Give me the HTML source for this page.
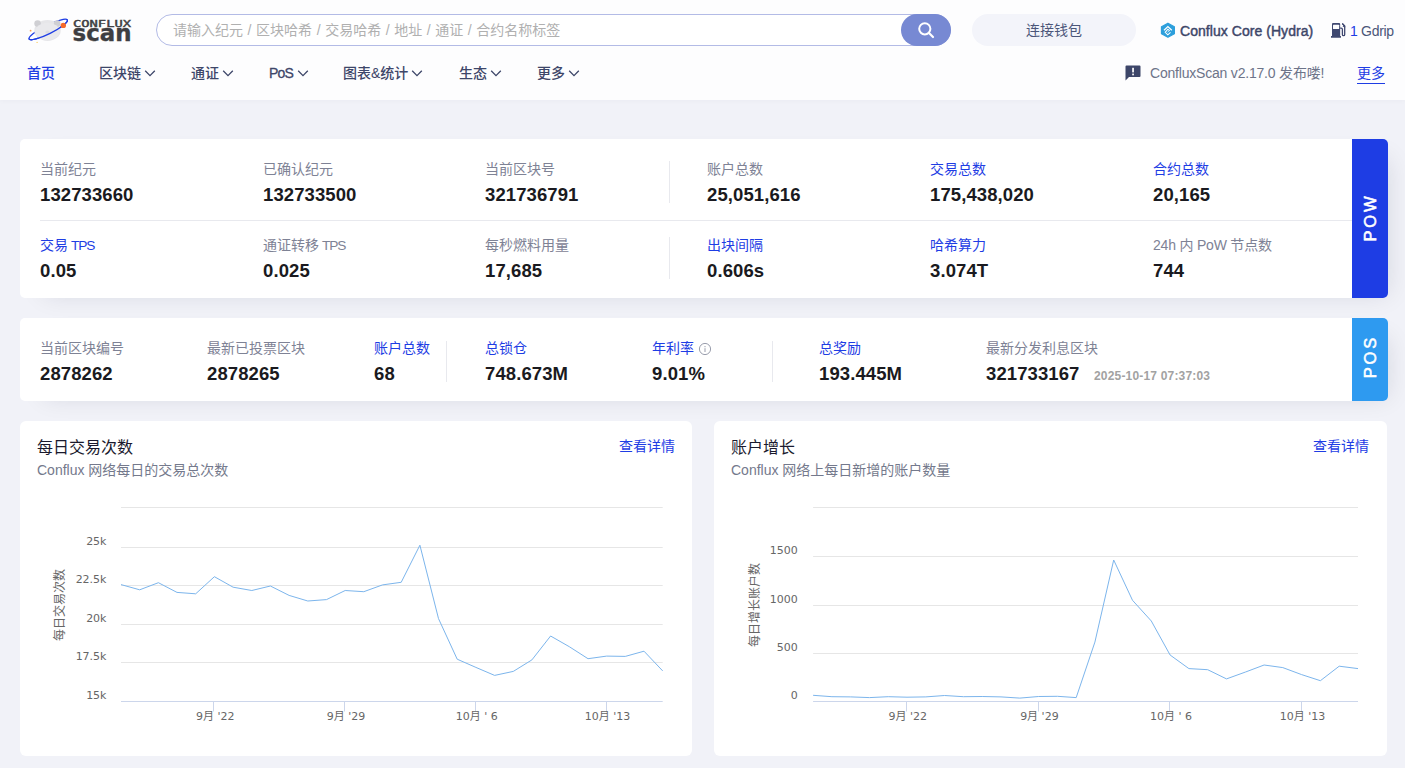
<!DOCTYPE html>
<html lang="zh-CN">
<head>
<meta charset="utf-8">
<title>ConfluxScan</title>
<style>
*{box-sizing:border-box;margin:0;padding:0}
html,body{width:1405px;height:768px;overflow:hidden}
body{background:#f1f2f8;font-family:"Liberation Sans","Noto Sans CJK SC",sans-serif;color:#1a1a2e;position:relative;font-size:14px}
.abs{position:absolute}
#header{position:absolute;left:0;top:0;width:1405px;height:100px;background:#fdfdfe;box-shadow:0 1px 5px rgba(20,27,50,0.03)}
#search{position:absolute;left:156px;top:14px;width:795px;height:32px;border:1px solid #b3bbe6;border-radius:16px;background:#fff}
#search .ph{position:absolute;left:16px;top:0;line-height:30px;font-size:14px;color:#b0b0b0;white-space:nowrap;word-spacing:0.7px}
#sbtn{position:absolute;left:901px;top:14px;width:50px;height:32px;border-radius:16px;background:#7789d3}
#wallet{position:absolute;left:972px;top:14px;width:164px;height:32px;border-radius:16px;background:#f3f4fa;color:#4b5679;font-size:14px;line-height:32px;text-align:center}
.nav{position:absolute;top:62px;height:22px;line-height:22px;font-size:14px;font-weight:500;color:#3d4669;white-space:nowrap}
.nav svg{display:inline-block;vertical-align:middle;margin-left:3px;margin-top:-2px}
.card{position:absolute;background:#fff;box-shadow:12px 8px 24px -12px rgba(20,27,50,0.12)}
.lab{position:absolute;font-size:14px;line-height:20px;color:#7e8295;white-space:nowrap}
.lab.b{color:#1e3de4}
.val{position:absolute;font-size:18.5px;letter-spacing:0.1px;margin-top:1px;line-height:24px;font-weight:bold;color:#1a1a20;white-space:nowrap}
.vd{position:absolute;width:1px;background:#e8e9ee}
.tab{position:absolute;color:#fff;font-weight:normal;-webkit-text-stroke:0.55px #fff;font-size:16.5px;letter-spacing:2.9px;border-radius:0 5px 5px 0}
.tab span{position:absolute;left:50%;top:50%;transform:translate(-50%,-50%) rotate(-90deg);white-space:nowrap;display:block;padding-left:2.9px}
.ct{position:absolute;font-size:16px;line-height:22px;color:#1a1a2e;white-space:nowrap}
.cs{position:absolute;font-size:14px;line-height:20px;color:#74798c;white-space:nowrap}
.cl{position:absolute;font-size:14px;line-height:20px;color:#1e3de4;white-space:nowrap}
svg text{font-family:"Liberation Sans","Noto Sans CJK SC",sans-serif}
svg text.hc{font-family:"DejaVu Sans","Noto Sans CJK SC",sans-serif}
</style>
</head>
<body>
<div id="header">
  <!-- logo -->
  <svg class="abs" style="left:26px;top:14px" width="110" height="32" viewBox="0 0 110 32">
    <g transform="translate(22.2 15.5) rotate(-26.4)"><ellipse cx="0" cy="0" rx="21.4" ry="4.3" fill="none" stroke="#1e3de4" stroke-width="1.3"/></g>
    <ellipse cx="21.5" cy="16.4" rx="13.2" ry="10.5" fill="#e6e6e9"/>
    <circle cx="11.6" cy="9.6" r="3.3" fill="#cfcfd3"/>
    <circle cx="31.2" cy="9.6" r="3.3" fill="#cfcfd3"/>
    <ellipse cx="21.5" cy="17.4" rx="12" ry="8.6" fill="#e9e9ec"/>
    <ellipse cx="21.5" cy="18" rx="2.2" ry="1.6" fill="#dcdce0"/>
    <g transform="translate(22.2 15.5) rotate(-26.4)"><path d="M-21.4 0 A21.4 4.3 0 0 0 21.4 0" fill="none" stroke="#1e3de4" stroke-width="1.3" stroke-linecap="round"/></g>
    <circle cx="37.3" cy="11.4" r="2.7" fill="#f56a2c"/>
    <circle cx="4.6" cy="16.7" r="0.9" fill="#f9a45a"/>
    <circle cx="11.1" cy="28.4" r="0.7" fill="#fbd36a"/>
    <text x="47" y="12.5" font-size="8" fill="#3e3e42" stroke="#3e3e42" stroke-width="0.35" textLength="58" lengthAdjust="spacingAndGlyphs" style="font-family:'DejaVu Sans Mono','Liberation Mono',monospace">CONFLUX</text>
    <text x="46.5" y="27.3" font-size="22.6" font-weight="bold" fill="#3e3e42" stroke="#3e3e42" stroke-width="0.35" textLength="59" lengthAdjust="spacingAndGlyphs" style="font-family:'DejaVu Sans','Liberation Sans',sans-serif">scan</text>
  </svg>
  <div id="search"><span class="ph">请输入纪元 / 区块哈希 / 交易哈希 / 地址 / 通证 / 合约名称标签</span></div>
  <div id="sbtn">
    <svg class="abs" style="left:16px;top:7px" width="18" height="18" viewBox="0 0 18 18"><circle cx="7.8" cy="7.8" r="5.6" fill="none" stroke="#fff" stroke-width="2"/><path d="M12 12 L16 16" stroke="#fff" stroke-width="2.2" stroke-linecap="round"/></svg>
  </div>
  <div id="wallet">连接钱包</div>
  <!-- network -->
  <svg class="abs" style="left:1159px;top:22px" width="18" height="17" viewBox="0 0 18 17">
    <path d="M8.92 1.25 L15.35 4.7 V11.7 L8.92 15.2 L2.5 11.7 V4.7 Z" fill="#2d9fdc" stroke="#2d9fdc" stroke-width="1.3" stroke-linejoin="round"/>
    <path d="M5 8.2 L8.88 4.6 L12.8 8.25" fill="none" stroke="#fff" stroke-width="1.25"/>
    <path d="M10.7 8.9 L8.88 7.2 L6.2 10.3 L8.8 12.8 L11.5 10.3" fill="none" stroke="#fff" stroke-width="1.05"/>
    <path d="M9.7 9.2 L8.5 10.4" fill="none" stroke="#fff" stroke-width="0.9"/>
  </svg>
  <div class="abs" style="left:1180px;top:20px;line-height:22px;font-size:14px;font-weight:normal;-webkit-text-stroke:0.45px #3d4669;color:#3d4669;white-space:nowrap;letter-spacing:0.05px" id="net">Conflux Core (Hydra)</div>
  <svg class="abs" style="left:1330px;top:22px" width="17" height="17" viewBox="0 0 17 17">
    <path d="M2 2.1 Q2 1.05 3.05 1.05 H9.1 Q10.15 1.05 10.15 2.1 V14.1 H10.95 V15.7 H1 V14.1 H2 Z" fill="#3f4870"/>
    <rect x="3" y="2.7" width="6.15" height="4.35" rx="0.6" fill="#fdfdfe"/>
    <path d="M10.1 6.2 H11.2 Q12.4 6.2 12.4 7.4 V12.5 Q12.4 13.7 13.55 13.7 Q14.7 13.7 14.7 12.5 V4.2 L12.4 1.5" fill="none" stroke="#3f4870" stroke-width="1.3"/>
    <path d="M12.1 1.1 L15.2 3.6 V5.4 L12.6 4.4 L13.5 3.2 L12.1 2.4 Z" fill="#3f4870"/>
  </svg>
  <div class="abs" style="left:1350px;top:20px;line-height:22px;font-size:14px;color:#4b5679;white-space:nowrap;letter-spacing:-0.3px"><span style="color:#1e3de4">1</span> Gdrip</div>

  <!-- nav -->
  <div class="nav" style="left:27px;color:#1e3de4;font-weight:500">首页</div>
  <div class="nav" style="left:99px">区块链<svg width="12" height="7" viewBox="0 0 12 7"><path d="M1.2 0.8 L6 5.6 L10.8 0.8" fill="none" stroke="#3d4669" stroke-width="1.3"/></svg></div>
  <div class="nav" style="left:191px">通证<svg width="12" height="7" viewBox="0 0 12 7"><path d="M1.2 0.8 L6 5.6 L10.8 0.8" fill="none" stroke="#3d4669" stroke-width="1.3"/></svg></div>
  <div class="nav" style="left:269px"><span style="letter-spacing:-0.8px;margin-right:1.3px;-webkit-text-stroke:0.3px #3d4669">PoS</span><svg width="12" height="7" viewBox="0 0 12 7"><path d="M1.2 0.8 L6 5.6 L10.8 0.8" fill="none" stroke="#3d4669" stroke-width="1.3"/></svg></div>
  <div class="nav" style="left:343px">图表&amp;统计<svg width="12" height="7" viewBox="0 0 12 7"><path d="M1.2 0.8 L6 5.6 L10.8 0.8" fill="none" stroke="#3d4669" stroke-width="1.3"/></svg></div>
  <div class="nav" style="left:459px">生态<svg width="12" height="7" viewBox="0 0 12 7"><path d="M1.2 0.8 L6 5.6 L10.8 0.8" fill="none" stroke="#3d4669" stroke-width="1.3"/></svg></div>
  <div class="nav" style="left:537px">更多<svg width="12" height="7" viewBox="0 0 12 7"><path d="M1.2 0.8 L6 5.6 L10.8 0.8" fill="none" stroke="#3d4669" stroke-width="1.3"/></svg></div>

  <!-- notice -->
  <svg class="abs" style="left:1124px;top:64px" width="18" height="18" viewBox="0 0 18 18">
    <path d="M2.5 1.5 H15.5 Q16.5 1.5 16.5 2.5 V12 Q16.5 13 15.5 13 H5 L1.5 16.5 V2.5 Q1.5 1.5 2.5 1.5 Z" fill="#3d4669"/>
    <rect x="8.2" y="3.8" width="1.7" height="4.6" fill="#fff"/><rect x="8.2" y="9.6" width="1.7" height="1.7" fill="#fff"/>
  </svg>
  <div class="abs" style="left:1150px;top:62px;line-height:22px;font-size:14px;color:#6d7489;white-space:nowrap;letter-spacing:-0.2px">ConfluxScan v2.17.0 发布喽!</div>
  <div class="abs" style="left:1357px;top:62px;line-height:22px;font-size:14px;color:#1e3de4;white-space:nowrap;border-bottom:1px solid #1e3de4;height:22px">更多</div>
</div>

<!-- POW card -->
<div class="card" style="left:20px;top:139px;width:1368px;height:159px;border-radius:5px"></div>
<div class="tab" style="left:1352px;top:139px;width:36px;height:159px;background:#1e3de4"><span>POW</span></div>
<div class="abs" style="left:40px;top:220px;width:1312px;height:1px;background:#e8e9ee"></div>
<div class="vd" style="left:669px;top:161px;height:42px"></div>
<div class="vd" style="left:669px;top:237px;height:42px"></div>

<div class="lab" style="left:40px;top:159px">当前纪元</div><div class="val" style="left:40px;top:182px">132733660</div>
<div class="lab" style="left:263px;top:159px">已确认纪元</div><div class="val" style="left:263px;top:182px">132733500</div>
<div class="lab" style="left:485px;top:159px">当前区块号</div><div class="val" style="left:485px;top:182px">321736791</div>
<div class="lab" style="left:707px;top:159px">账户总数</div><div class="val" style="left:707px;top:182px">25,051,616</div>
<div class="lab b" style="left:930px;top:159px">交易总数</div><div class="val" style="left:930px;top:182px">175,438,020</div>
<div class="lab b" style="left:1153px;top:159px">合约总数</div><div class="val" style="left:1153px;top:182px">20,165</div>

<div class="lab b" style="left:40px;top:235px">交易<span style="font-size:13.7px;letter-spacing:-1.15px;margin-left:0.4px"> TPS</span></div><div class="val" style="left:40px;top:258px">0.05</div>
<div class="lab" style="left:263px;top:235px">通证转移<span style="font-size:13.7px;letter-spacing:-1.15px;margin-left:0.4px"> TPS</span></div><div class="val" style="left:263px;top:258px">0.025</div>
<div class="lab" style="left:485px;top:235px">每秒燃料用量</div><div class="val" style="left:485px;top:258px">17,685</div>
<div class="lab b" style="left:707px;top:235px">出块间隔</div><div class="val" style="left:707px;top:258px">0.606s</div>
<div class="lab b" style="left:930px;top:235px">哈希算力</div><div class="val" style="left:930px;top:258px">3.074T</div>
<div class="lab" style="left:1153px;top:235px;letter-spacing:-0.2px">24h 内 PoW 节点数</div><div class="val" style="left:1153px;top:258px">744</div>

<!-- POS card -->
<div class="card" style="left:20px;top:318px;width:1368px;height:83px;border-radius:5px"></div>
<div class="tab" style="left:1352px;top:318px;width:36px;height:83px;background:#2e9af0"><span style="margin-top:-1.5px">POS</span></div>
<div class="vd" style="left:446px;top:341px;height:41px"></div>
<div class="vd" style="left:772px;top:341px;height:41px"></div>
<div class="lab" style="left:40px;top:338px">当前区块编号</div><div class="val" style="left:40px;top:361px">2878262</div>
<div class="lab" style="left:207px;top:338px">最新已投票区块</div><div class="val" style="left:207px;top:361px">2878265</div>
<div class="lab b" style="left:374px;top:338px">账户总数</div><div class="val" style="left:374px;top:361px">68</div>
<div class="lab b" style="left:485px;top:338px">总锁仓</div><div class="val" style="left:485px;top:361px">748.673M</div>
<div class="lab b" style="left:652px;top:338px">年利率</div><div class="val" style="left:652px;top:361px">9.01%</div>
<svg class="abs" style="left:698px;top:342px" width="14" height="14" viewBox="0 0 14 14"><circle cx="7" cy="7" r="5.6" fill="none" stroke="#9a9ead" stroke-width="1"/><rect x="6.5" y="6.2" width="1" height="3.8" fill="#9a9ead"/><rect x="6.5" y="4" width="1" height="1.2" fill="#9a9ead"/></svg>
<div class="lab b" style="left:819px;top:338px">总奖励</div><div class="val" style="left:819px;top:361px">193.445M</div>
<div class="lab" style="left:986px;top:338px">最新分发利息区块</div><div class="val" style="left:986px;top:361px">321733167</div>
<div class="abs" style="left:1094px;top:367px;font-size:12px;line-height:18px;font-weight:bold;color:#a2a2a2;white-space:nowrap;letter-spacing:0.18px">2025-10-17 07:37:03</div>

<!-- charts -->
<div class="card" style="left:20px;top:421px;width:672px;height:335px;border-radius:6px;box-shadow:none"></div>
<div class="card" style="left:714px;top:421px;width:673px;height:335px;border-radius:6px;box-shadow:none"></div>
<div class="ct" style="left:37px;top:437px">每日交易次数</div>
<div class="cs" style="left:37px;top:460px">Conflux 网络每日的交易总次数</div>
<div class="cl" style="left:619px;top:436px">查看详情</div>
<div class="ct" style="left:731px;top:437px">账户增长</div>
<div class="cs" style="left:731px;top:460px">Conflux 网络上每日新增的账户数量</div>
<div class="cl" style="left:1313px;top:436px">查看详情</div>

<svg class="abs" style="left:0;top:421px" width="1405" height="347" viewBox="0 421 1405 347">
<g id="chartL">
<path d="M121 507.5 H662.7" stroke="#e6e6e6" stroke-width="1" fill="none"/>
<path d="M121 547.5 H662.7" stroke="#e6e6e6" stroke-width="1" fill="none"/>
<path d="M121 585.5 H662.7" stroke="#e6e6e6" stroke-width="1" fill="none"/>
<path d="M121 624.5 H662.7" stroke="#e6e6e6" stroke-width="1" fill="none"/>
<path d="M121 662.5 H662.7" stroke="#e6e6e6" stroke-width="1" fill="none"/>
<path d="M121 701.5 H662.7" stroke="#ccd6eb" stroke-width="1" fill="none"/>
<path d="M213.5 701.5 V711.5" stroke="#ccd6eb" stroke-width="1" fill="none"/>
<text x="215.2" y="720" text-anchor="middle" font-size="11" class="hc" fill="#666">9月 '22</text>
<path d="M344.5 701.5 V711.5" stroke="#ccd6eb" stroke-width="1" fill="none"/>
<text x="346.0" y="720" text-anchor="middle" font-size="11" class="hc" fill="#666">9月 '29</text>
<path d="M475.5 701.5 V711.5" stroke="#ccd6eb" stroke-width="1" fill="none"/>
<text x="476.7" y="720" text-anchor="middle" font-size="11" class="hc" fill="#666">10月 ' 6</text>
<path d="M606.5 701.5 V711.5" stroke="#ccd6eb" stroke-width="1" fill="none"/>
<text x="607.5" y="720" text-anchor="middle" font-size="11" class="hc" fill="#666">10月 '13</text>
<text x="106.5" y="545.0" text-anchor="end" font-size="11" class="hc" fill="#666">25k</text>
<text x="106.5" y="583.0" text-anchor="end" font-size="11" class="hc" fill="#666">22.5k</text>
<text x="106.5" y="622.0" text-anchor="end" font-size="11" class="hc" fill="#666">20k</text>
<text x="106.5" y="660.0" text-anchor="end" font-size="11" class="hc" fill="#666">17.5k</text>
<text x="106.5" y="699.0" text-anchor="end" font-size="11" class="hc" fill="#666">15k</text>
<text transform="translate(63.6,605) rotate(-90)" text-anchor="middle" font-size="12" fill="#666">每日交易次数</text>
<path d="M121.0 584.6 L139.7 589.8 L158.4 582.7 L177.0 592.4 L195.7 593.8 L214.4 576.7 L233.1 587.2 L251.8 590.5 L270.4 586.0 L289.1 595.4 L307.8 601.0 L326.5 599.6 L345.2 590.5 L363.8 591.7 L382.5 584.9 L401.2 582.3 L419.9 545.2 L438.5 618.6 L457.2 659.2 L475.9 667.4 L494.6 675.4 L513.3 671.4 L531.9 659.9 L550.6 636.0 L569.3 646.7 L588.0 658.7 L606.7 656.1 L625.3 656.4 L644.0 651.2 L662.7 670.9" stroke="#7cb5ec" stroke-width="1" fill="none" stroke-linejoin="round"/>
</g>
<g id="chartR">
<path d="M813.1 507.5 H1358" stroke="#e6e6e6" stroke-width="1" fill="none"/>
<path d="M813.1 556.5 H1358" stroke="#e6e6e6" stroke-width="1" fill="none"/>
<path d="M813.1 605.5 H1358" stroke="#e6e6e6" stroke-width="1" fill="none"/>
<path d="M813.1 653.5 H1358" stroke="#e6e6e6" stroke-width="1" fill="none"/>
<path d="M813.1 701.5 H1358" stroke="#ccd6eb" stroke-width="1" fill="none"/>
<path d="M906.5 701.5 V711.5" stroke="#ccd6eb" stroke-width="1" fill="none"/>
<text x="907.8" y="720" text-anchor="middle" font-size="11" class="hc" fill="#666">9月 '22</text>
<path d="M1038.5 701.5 V711.5" stroke="#ccd6eb" stroke-width="1" fill="none"/>
<text x="1039.4" y="720" text-anchor="middle" font-size="11" class="hc" fill="#666">9月 '29</text>
<path d="M1169.5 701.5 V711.5" stroke="#ccd6eb" stroke-width="1" fill="none"/>
<text x="1170.9" y="720" text-anchor="middle" font-size="11" class="hc" fill="#666">10月 ' 6</text>
<path d="M1301.5 701.5 V711.5" stroke="#ccd6eb" stroke-width="1" fill="none"/>
<text x="1302.4" y="720" text-anchor="middle" font-size="11" class="hc" fill="#666">10月 '13</text>
<text x="797.7" y="554.0" text-anchor="end" font-size="11" class="hc" fill="#666">1500</text>
<text x="797.7" y="603.0" text-anchor="end" font-size="11" class="hc" fill="#666">1000</text>
<text x="797.7" y="651.0" text-anchor="end" font-size="11" class="hc" fill="#666">500</text>
<text x="797.7" y="699.0" text-anchor="end" font-size="11" class="hc" fill="#666">0</text>
<text transform="translate(759,605) rotate(-90)" text-anchor="middle" font-size="12" fill="#666">每日增长账户数</text>
<path d="M813.1 695.3 L831.9 696.7 L850.7 696.9 L869.5 697.6 L888.3 696.7 L907.0 697.2 L925.8 696.9 L944.6 695.5 L963.4 696.7 L982.2 696.5 L1001.0 696.9 L1019.8 698.1 L1038.6 696.5 L1057.4 696.3 L1076.2 697.6 L1094.9 642.1 L1113.7 560.0 L1132.5 600.3 L1151.3 621.0 L1170.1 655.0 L1188.9 668.6 L1207.7 669.7 L1226.5 678.9 L1245.3 672.1 L1264.1 665.0 L1282.8 667.6 L1301.6 674.6 L1320.4 680.7 L1339.2 666.2 L1358.0 668.6" stroke="#7cb5ec" stroke-width="1" fill="none" stroke-linejoin="round"/>
</g>
</svg>
</body>
</html>
